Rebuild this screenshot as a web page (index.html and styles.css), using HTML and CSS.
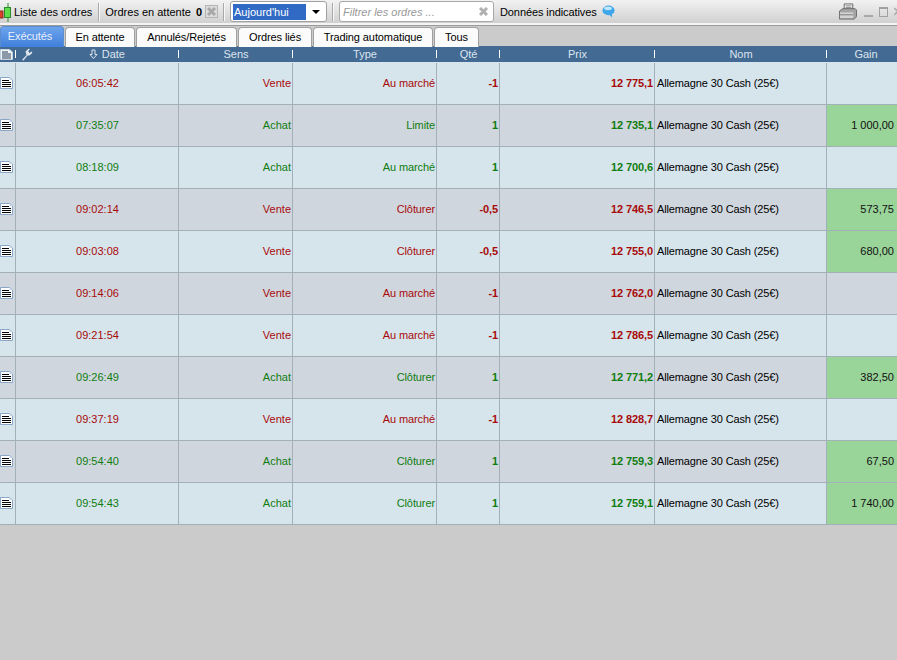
FILE: index.html
```html
<!DOCTYPE html>
<html lang="fr">
<head>
    <meta charset="UTF-8">
    <title>Liste des ordres</title>
    <link rel="stylesheet" href="styles.css">
</head>
<body>
    <!-- Barre d'outils -->
    <div class="toolbar">
        <svg class="candles" width="12" height="22" viewBox="0 0 12 22">
            <rect x="-3" y="10" width="6" height="7" fill="#d8402c" stroke="#8a2a20"/>
            <path d="M8 2V21" stroke="#2a8a2a"/>
            <rect x="4.5" y="6.5" width="6" height="10" fill="#5fdc4a" stroke="#2a8a2a"/>
        </svg>
        <span class="tool-title">Liste des ordres</span>
        <span class="sep sep-first"></span>
        <span class="tool-label">Ordres en attente</span>
        <b class="count">0</b>
        <svg class="disabled-icon" width="13" height="13" viewBox="0 0 13 13">
            <rect x="0.5" y="0.5" width="12" height="12" fill="#dcdcdc" stroke="#b4b4b4"/>
            <path d="M3 3L10 10M10 3L3 10" stroke="#a8a8a8" stroke-width="3"/>
        </svg>
        <span class="sep"></span>
        <div class="period">
            <span class="period-value">Aujourd'hui</span>
            <span class="period-arrow"></span>
        </div>
        <span class="sep"></span>
        <div class="filter">
            <span class="filter-text">Filtrer les ordres ...</span>
            <svg width="9" height="9" viewBox="0 0 9 9">
                <path d="M1 1L8 8M8 1L1 8" stroke="#b0b0b0" stroke-width="3"/>
            </svg>
        </div>
        <span class="tool-label tight">Données indicatives</span>
        <svg class="bubble" width="13" height="13" viewBox="0 0 14 14">
            <ellipse cx="7" cy="5.8" rx="6.5" ry="5.3" fill="#3fa6ea"/>
            <ellipse cx="6.5" cy="3.6" rx="4.2" ry="2" fill="#bfe6fb"/>
            <path d="M7 10L11 13.5L10.5 9Z" fill="#3fa6ea"/>
        </svg>
        <div class="win-buttons">
            <svg width="18" height="17" viewBox="0 0 19 17">
                <path d="M5.5 .5H14.5V6H5.5Z" fill="#f4f4f4" stroke="#666"/>
                <path d="M7 2.5H13M7 4.2H13" stroke="#888"/>
                <path d="M.5 8L4 5.5H17L18.5 7V14L16 16.5H.5Z" fill="#a4a4a4" stroke="#6a6a6a"/>
                <path d="M1 9.5H15V15.5H1Z" fill="#d4d4d4"/>
                <path d="M1 12H15" stroke="#777"/>
            </svg>
            <span class="win-min"></span>
            <span class="win-max"></span>
            <svg class="win-close" width="3" height="9" viewBox="0 0 3 9">
                <path d="M0 1L8 8M8 1L0 8" stroke="#aaa" stroke-width="1.6"/>
            </svg>
        </div>
    </div>

    <!-- Onglets -->
    <div class="tabs">
        <div class="tab tab-active">Exécutés</div>
        <div class="tab tab-attente">En attente</div>
        <div class="tab tab-annules">Annulés/Rejetés</div>
        <div class="tab tab-lies">Ordres liés</div>
        <div class="tab tab-auto">Trading automatique</div>
        <div class="tab tab-tous">Tous</div>
    </div>

    <!-- Tableau -->
    <div class="head grid">
        <div class="hcell hcell-doc">
            <svg width="13" height="11" viewBox="0 0 13 11">
                <path d="M.5 .5H9.5L12.5 3V10.5H.5Z" fill="#eef3f8" stroke="#c4d2e0"/>
                <path d="M2 3H8M2 5H11M2 7H11M2 9H11" stroke="#2a4058"/>
            </svg>
        </div>
        <div class="hcell hcell-date">
            <svg class="wrench" width="12" height="13" viewBox="0 0 12 13">
                <path d="M1 12L5.5 7L4.5 3.5L7.5 .8L9 1L7.2 3.2L8.6 5L11 3.2L11.2 5L8.5 7.5L6.5 7.5L2.5 12.5Z" fill="#dfe6ee"/>
            </svg>
            <span class="date-label">
                <svg width="9" height="11" viewBox="0 0 9 11">
                    <path d="M3 1H6V5.5H8L4.5 9.5L1 5.5H3Z" fill="none" stroke="#dfe6ee"/>
                </svg>
                Date
            </span>
        </div>
        <div class="hcell">Sens</div>
        <div class="hcell">Type</div>
        <div class="hcell">Qté</div>
        <div class="hcell">Prix</div>
        <div class="hcell">Nom</div>
        <div class="hcell hcell-last">Gain</div>
    </div>
    <div id="rows"></div>

    <script>
        // Données du tableau : heure, sens, type, quantité, prix, gain
        const orders = [
            ["06:05:42", "Vente", "Au marché", "-1", "12 775,1", ""],
            ["07:35:07", "Achat", "Limite", "1", "12 735,1", "1 000,00"],
            ["08:18:09", "Achat", "Au marché", "1", "12 700,6", ""],
            ["09:02:14", "Vente", "Clôturer", "-0,5", "12 746,5", "573,75"],
            ["09:03:08", "Vente", "Clôturer", "-0,5", "12 755,0", "680,00"],
            ["09:14:06", "Vente", "Au marché", "-1", "12 762,0", ""],
            ["09:21:54", "Vente", "Au marché", "-1", "12 786,5", ""],
            ["09:26:49", "Achat", "Clôturer", "1", "12 771,2", "382,50"],
            ["09:37:19", "Vente", "Au marché", "-1", "12 828,7", ""],
            ["09:54:40", "Achat", "Clôturer", "1", "12 759,3", "67,50"],
            ["09:54:43", "Achat", "Clôturer", "1", "12 759,1", "1 740,00"]
        ];

        const docIcon = `<svg width="13" height="12" viewBox="0 0 13 12">
            <path d="M.5 .5H9.5L12.5 3V11.5H.5Z" fill="#fff" stroke="#8aa6c4"/>
            <path d="M9.5 .5V3H12.5Z" fill="#c4d6ea"/>
            <path d="M2 3.5H9M2 5.5H11M2 7.5H11M2 9.5H11" stroke="#000"/>
        </svg>`;

        document.getElementById("rows").innerHTML = orders.map(o => {
            const color = o[1] === "Vente" ? "sell" : "buy";
            const gain = o[5] ? "cell num gain" : "cell num";
            return `<div class="row grid ${color}">
                <div class="cell cell-doc">${docIcon}</div>
                <div class="cell center">${o[0]}</div>
                <div class="cell num">${o[1]}</div>
                <div class="cell num tight">${o[2]}</div>
                <div class="cell num strong">${o[3]}</div>
                <div class="cell num strong">${o[4]}</div>
                <div class="cell name">Allemagne 30 Cash (25€)</div>
                <div class="${gain}">${o[5]}</div>
            </div>`;
        }).join("");
    </script>
</body>
</html>
```

FILE: styles.css
```css
/* Général */
html, body {
    margin: 0;
    height: 100%;
    overflow: hidden;
}

body {
    background: #cbcbcb;
    font-family: "Liberation Sans", Arial, sans-serif;
    font-size: 11px;
    color: #000;
}

.tight {
    letter-spacing: -0.1px;
}

/* Barre d'outils */
.toolbar {
    display: flex;
    align-items: center;
    height: 23px;
    background: linear-gradient(#f2f2f2, #d0d0d0);
    border-bottom: 2px solid #f4f4f4;
    box-shadow: 0 1px 0 #9a9a9a;
    overflow: hidden;
}

.candles {
    flex: none;
}

.tool-title {
    margin-left: 2px;
}

.sep {
    flex: none;
    width: 1px;
    height: 18px;
    margin: 0 5px;
    background: #a8a8a8;
    border-right: 1px solid #f8f8f8;
}

.sep-first {
    margin: 0 5px 0 6px;
}

.count {
    margin-left: 5px;
}

.disabled-icon {
    margin-left: 3px;
}

.period {
    display: flex;
    align-items: center;
    flex: none;
    width: 97px;
    height: 21px;
    padding: 0 2px;
    box-sizing: border-box;
    background: #fff;
    border: 1px solid #a0a0a0;
    border-radius: 3px;
}

.period-value {
    flex: 1;
    height: 16px;
    line-height: 16px;
    padding-left: 1px;
    background: #316ac5;
    color: #fff;
}

.period-arrow {
    width: 0;
    height: 0;
    margin: 0 4px 0 6px;
    border-left: 4px solid transparent;
    border-right: 4px solid transparent;
    border-top: 4px solid #000;
}

.filter {
    display: flex;
    align-items: center;
    justify-content: space-between;
    flex: none;
    width: 155px;
    height: 21px;
    margin-right: 6px;
    padding: 0 5px 0 3px;
    box-sizing: border-box;
    background: #fff;
    border: 1px solid #a8a8a8;
    border-radius: 3px;
}

.filter-text {
    font-style: italic;
    color: #999;
}

.bubble {
    margin-left: 5px;
}

.win-buttons {
    display: flex;
    align-items: center;
    margin-left: auto;
}

.win-min {
    width: 9px;
    height: 2px;
    margin: 9px 6px 0 7px;
    background: #a8a8a8;
}

.win-max {
    width: 7px;
    height: 7px;
    margin-right: 6px;
    border: 1px solid #a0a0a0;
    border-top-width: 2px;
}

/* Onglets */
.tabs {
    display: flex;
    height: 20px;
    margin-top: 1px;
    gap: 1px;
}

.tab {
    box-sizing: border-box;
    height: 20px;
    margin-top: 1px;
    line-height: 19px;
    text-align: center;
    letter-spacing: -0.1px;
    background: #fbfbfb;
    border: 1px solid #a0a0a0;
    border-bottom: none;
    border-radius: 4px 4px 0 0;
}

.tab-active {
    width: 64px;
    height: 21px;
    margin-top: 0;
    padding-right: 4px;
    background: linear-gradient(#6ea4ec, #3f7fdc);
    border-color: #5a8cd0;
    color: #e8f0fa;
}

.tab-attente { width: 70px; }
.tab-annules { width: 101px; }
.tab-lies { width: 74px; }
.tab-auto { width: 120px; }
.tab-tous { width: 45px; }

/* Tableau */
.grid {
    display: grid;
    grid-template-columns: 16px 163px 114px 144px 63px 155px 172px 70px;
}

.head {
    height: 16px;
    background: #426a93;
    border-bottom: 1px solid #d8e4ec;
    color: #dde5ee;
    line-height: 16px;
}

.hcell {
    position: relative;
    text-align: center;
}

/* petit trait blanc entre les colonnes */
.hcell::after {
    content: "";
    position: absolute;
    right: 0;
    top: 4px;
    width: 1px;
    height: 8px;
    background: #fff;
}

.hcell-last {
    padding-left: 8px;
}

.hcell-last::after {
    display: none;
}

.hcell-doc {
    display: flex;
    align-items: center;
}

.hcell-date {
    display: flex;
    align-items: center;
    justify-content: center;
}

.wrench {
    margin: 0 auto 0 5px;
}

.date-label {
    display: flex;
    align-items: center;
    gap: 4px;
    margin-right: 54px;
}

.row {
    height: 42px;
    background: #d6e4ec;
}

.row:nth-child(even) {
    background: #d0d6de;
}

.cell {
    display: flex;
    align-items: center;
    box-sizing: border-box;
    height: 42px;
    padding: 0 1px 2px 2px;
    border-right: 1px solid #a4b0b8;
    border-bottom: 1px solid #a4b0b8;
}

.cell:last-child {
    border-right: none;
    padding-right: 3px;
}

.cell-doc {
    padding: 0 1px 2px 0;
}

.center {
    justify-content: center;
}

.num {
    justify-content: flex-end;
}

.strong {
    font-weight: bold;
    letter-spacing: -0.1px;
}

.sell {
    color: #a80a0a;
}

.buy {
    color: #0f7d0f;
}

.name {
    color: #000;
    letter-spacing: -0.13px;
}

.gain {
    background: #99d499;
    color: #111;
}
```
